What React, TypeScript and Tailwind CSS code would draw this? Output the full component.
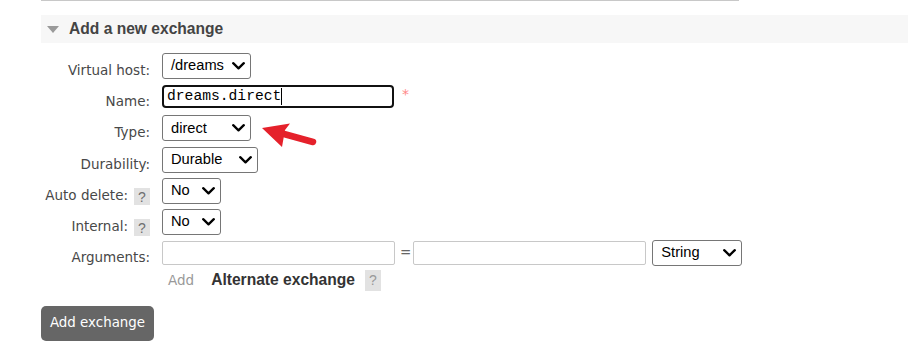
import React from "react";

const Chevron = () => (
  <svg width="13" height="8" viewBox="0 0 13 8" className="shrink-0">
    <polyline points="1.2,1.2 6.5,6.3 11.8,1.2" fill="none" stroke="#000" strokeWidth="2.3" strokeLinecap="round" strokeLinejoin="round" />
  </svg>
);

function Sel({ value, w }: { value: string; w: string }) {
  return (
    <div className={`${w} h-[26px] flex items-center justify-between border border-[#767676] rounded-[3px] bg-white pl-[8px] pr-[5px] font-['Liberation_Sans',Arial,sans-serif] text-[14.67px] text-black leading-none`}>
      <span>{value}</span>
      <Chevron />
    </div>
  );
}

const Help = ({ cls = "" }: { cls?: string }) => (
  <span className={`inline-flex items-center justify-center w-[16px] h-[17px] bg-[#e2e2e2] text-[#6f6f6f] font-['Liberation_Sans',Arial,sans-serif] text-[14px] leading-none ${cls}`}>?</span>
);

function Label({ children }: { children: React.ReactNode }) {
  return (
    <div className="flex justify-end items-start pt-[12px] leading-[16px] whitespace-nowrap">{children}</div>
  );
}

export default function App() {
  return (
    <div className="relative w-[909px] h-[360px] bg-white pl-[41px] pr-[1px] font-['DejaVu_Sans',Verdana,sans-serif] text-[13.5px] text-[#484848] overflow-hidden">
      <div className="w-[698px] h-px bg-[#c8c8c8]" />
      <div className="mt-[14px] h-[28px] bg-[#f7f7f7] flex items-center">
        <svg width="12" height="7" viewBox="0 0 12 7" className="ml-[6px]">
          <polygon points="0,0 12,0 6,7" fill="#9a9a9a" />
        </svg>
        <span className="ml-[10px] font-['Liberation_Sans',Arial,sans-serif] font-bold text-[15.6px] text-[#444]">Add a new exchange</span>
      </div>

      <div className="mt-[7px] grid grid-cols-[109px_auto] gap-x-[12px] grid-rows-[31px_31px_32px_31px_31px_31px_31px_24px]">
        <Label>Virtual host:</Label>
        <div className="flex items-center">
          <Sel value="/dreams" w="w-[89px]" />
        </div>

        <Label>Name:</Label>
        <div className="flex items-center">
          <div className="w-[232px] h-[23px] border-2 border-[#111] rounded-[4px] flex items-center pl-[3px] font-['Liberation_Mono','Courier_New',monospace] text-[14.67px] text-black leading-none">
            <span>dreams.direct</span>
            <span className="w-px h-[17px] bg-black" />
          </div>
          <span className="ml-[8px] -mt-[4px] text-[#f88] text-[14px]">*</span>
        </div>

        <Label>Type:</Label>
        <div className="flex items-center">
          <Sel value="direct" w="w-[89px]" />
        </div>

        <Label>Durability:</Label>
        <div className="flex items-center">
          <Sel value="Durable" w="w-[96px]" />
        </div>

        <Label>
          <span>Auto delete:</span>
          <Help cls="ml-[6px] mt-[1px]" />
        </Label>
        <div className="flex items-center">
          <Sel value="No" w="w-[59px]" />
        </div>

        <Label>
          <span>Internal:</span>
          <Help cls="ml-[6px] mt-[1px]" />
        </Label>
        <div className="flex items-center">
          <Sel value="No" w="w-[59px]" />
        </div>

        <Label>Arguments:</Label>
        <div className="flex items-center">
          <div className="w-[233px] h-[24px] border border-[#c8c8c8] rounded-[2px] bg-white" />
          <span className="ml-[5px] mr-[2px] text-[#666]">=</span>
          <div className="w-[233px] h-[24px] border border-[#c8c8c8] rounded-[2px] bg-white" />
          <div className="ml-[6px]">
            <Sel value="String" w="w-[90px]" />
          </div>
        </div>

        <div />
        <div className="flex items-center">
          <span className="ml-[6px] text-[#999]">Add</span>
          <span className="ml-[17px] font-['Liberation_Sans',Arial,sans-serif] font-bold text-[#333] text-[15.6px]">Alternate exchange</span>
          <span className="ml-[10px] inline-flex items-center justify-center w-[16px] h-[21px] bg-[#e2e2e2] text-[#999] font-['Liberation_Sans',Arial,sans-serif] text-[14px] leading-none">?</span>
        </div>
      </div>

      <button className="mt-[14px] w-[113px] h-[35px] rounded-[5px] bg-[#666] text-white text-[13.4px] flex items-center justify-center">
        Add exchange
      </button>

      <svg className="absolute left-[256px] top-[118px]" width="66" height="34" viewBox="0 0 66 34">
        <line x1="57" y1="24" x2="28" y2="16" stroke="#e5212b" strokeWidth="6.5" strokeLinecap="round" />
        <polygon points="6,10 34,5.5 29,12 26,29" fill="#e5212b" />
      </svg>
    </div>
  );
}
